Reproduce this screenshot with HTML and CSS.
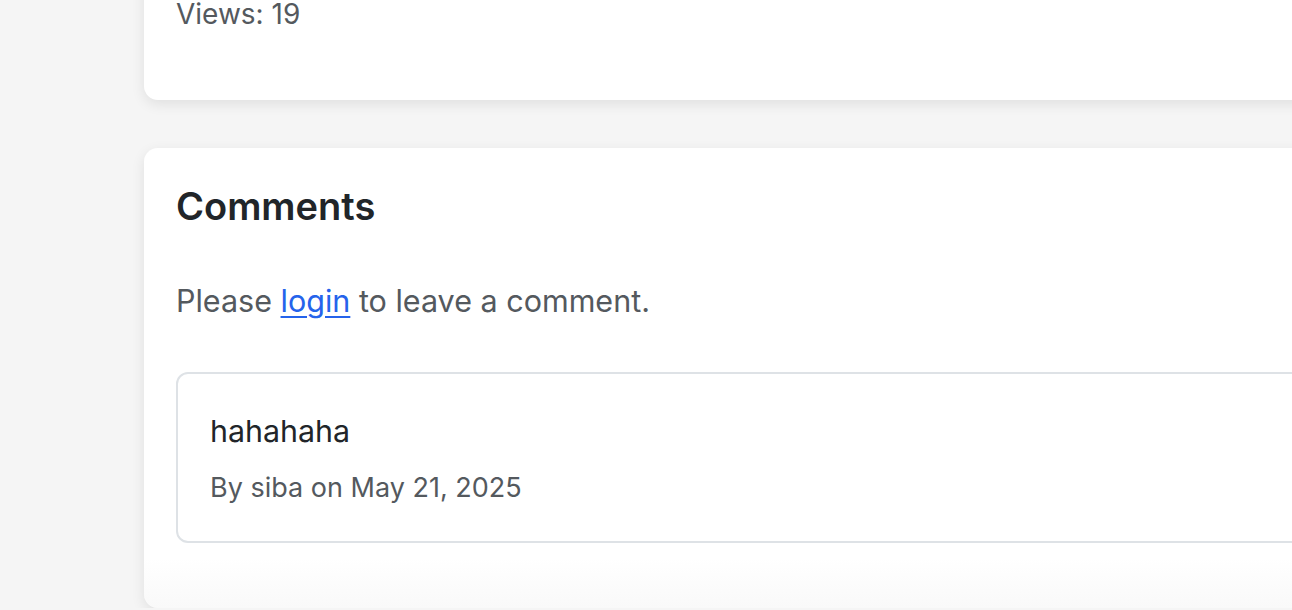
FILE: index.html
```html
<!DOCTYPE html>
<html lang="en">
<head>
<meta charset="utf-8">
<title>Post</title>
<link rel="stylesheet" href="styles.css">
</head>
<body>
<main class="page">
  <section class="card post-card">
    <p class="meta-line">Views: 19</p>
  </section>
  <section class="card comments-card">
    <h2 class="comments-title">Comments</h2>
    <p class="login-note">Please <a href="#" class="login-link">login</a> to leave a comment.</p>
    <div class="comment">
      <p class="comment-text">hahahaha</p>
      <p class="comment-meta">By siba on May 21, 2025</p>
    </div>
  </section>
</main>
</body>
</html>
```
FILE: styles.css
```css
html, body {
  margin: 0;
  padding: 0;
  background: #f5f5f5;
  overflow: hidden;
}
body {
  font-family: Inter, "Liberation Sans", sans-serif;
  color: #212529;
}
.page {
  display: flex;
  flex-direction: column;
  gap: 48px;
  padding-left: 144px;
  width: 1240px;
}
.card {
  background: #fff;
  border-radius: 14px;
  box-shadow: 0 4px 14px rgba(0, 0, 0, 0.09);
  padding: 32px;
}
.post-card {
  margin-top: -60px;
  padding-top: 60px;
  padding-bottom: 72px;
}
.meta-line {
  margin: 0;
  font-size: 28px;
  line-height: 28px;
  color: #54595e;
}
.comments-card {
  background: linear-gradient(to bottom, #fff calc(100% - 50px), #f9f9f9);
  padding-top: 35px;
  padding-bottom: 32px;
}
.comments-title {
  margin: 0;
  font-size: 38px;
  line-height: 46px;
  font-weight: 600;
  color: #212529;
}
.login-note {
  margin: 50px 0 49px;
  font-size: 30.5px;
  line-height: 44px;
  color: #54595e;
}
.login-link {
  color: #2563eb;
  text-decoration: underline;
  text-underline-offset: 4px;
  text-decoration-thickness: 2px;
}
.comment {
  border: 2px solid #dee2e6;
  border-radius: 12px;
  padding: 35px 32px 33px;
  margin-bottom: 33px;
}
.comment-text {
  margin: 0 0 15px;
  font-size: 30.4px;
  line-height: 44px;
  color: #212529;
}
.comment-meta {
  margin: 0;
  font-size: 27px;
  line-height: 40px;
  color: #54595e;
}
```
